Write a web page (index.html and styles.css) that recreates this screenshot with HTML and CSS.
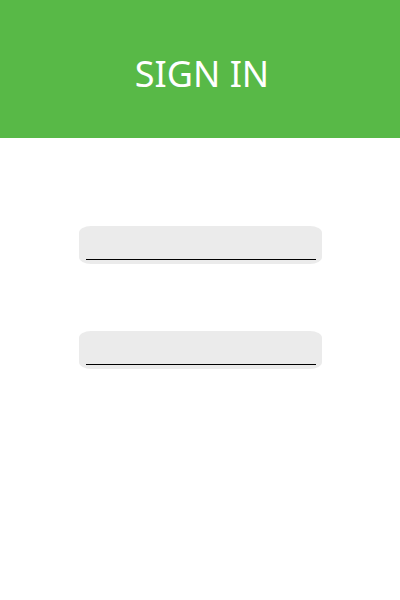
FILE: index.html
```html
<!DOCTYPE html>
<html lang="en">
<head>
<meta charset="utf-8">
<meta name="viewport" content="width=device-width, initial-scale=1">
<title>Sign in</title>
<link rel="stylesheet" href="styles.css">
</head>
<body>
<header class="banner"><h1 class="title">SIGN IN</h1></header>
<main>
<form class="form">
<div class="field"><input class="input" type="text" aria-label="Username" autocomplete="username"></div>
<div class="field"><input class="input" type="password" aria-label="Password" autocomplete="current-password"></div>
</form>
</main>
</body>
</html>
```

FILE: styles.css
```css
* {
  box-sizing: border-box;
}

body {
  margin: 0;
  background: #fff;
  font-family: "Noto Sans", sans-serif;
}

.banner {
  padding: 46px 16px 36px 20px;
  background: #58b947;
  text-align: center;
}

.title {
  margin: 0;
  color: #fff;
  font-size: 36px;
  font-weight: 400;
  line-height: 56px;
}

.form {
  display: flex;
  flex-direction: column;
  align-items: center;
  gap: 67px;
  padding: 88px 16px;
}

.field {
  width: 100%;
  max-width: 243px;
  padding: 0 6px 4px 7px;
  border-radius: 12px / 7px;
  background: #ebebeb;
}

.input {
  display: block;
  width: 100%;
  height: 34px;
  padding: 0 4px;
  border: 0;
  border-bottom: 1px solid #000;
  border-radius: 0;
  background: transparent;
  font: inherit;
  outline: 0;
}
```
